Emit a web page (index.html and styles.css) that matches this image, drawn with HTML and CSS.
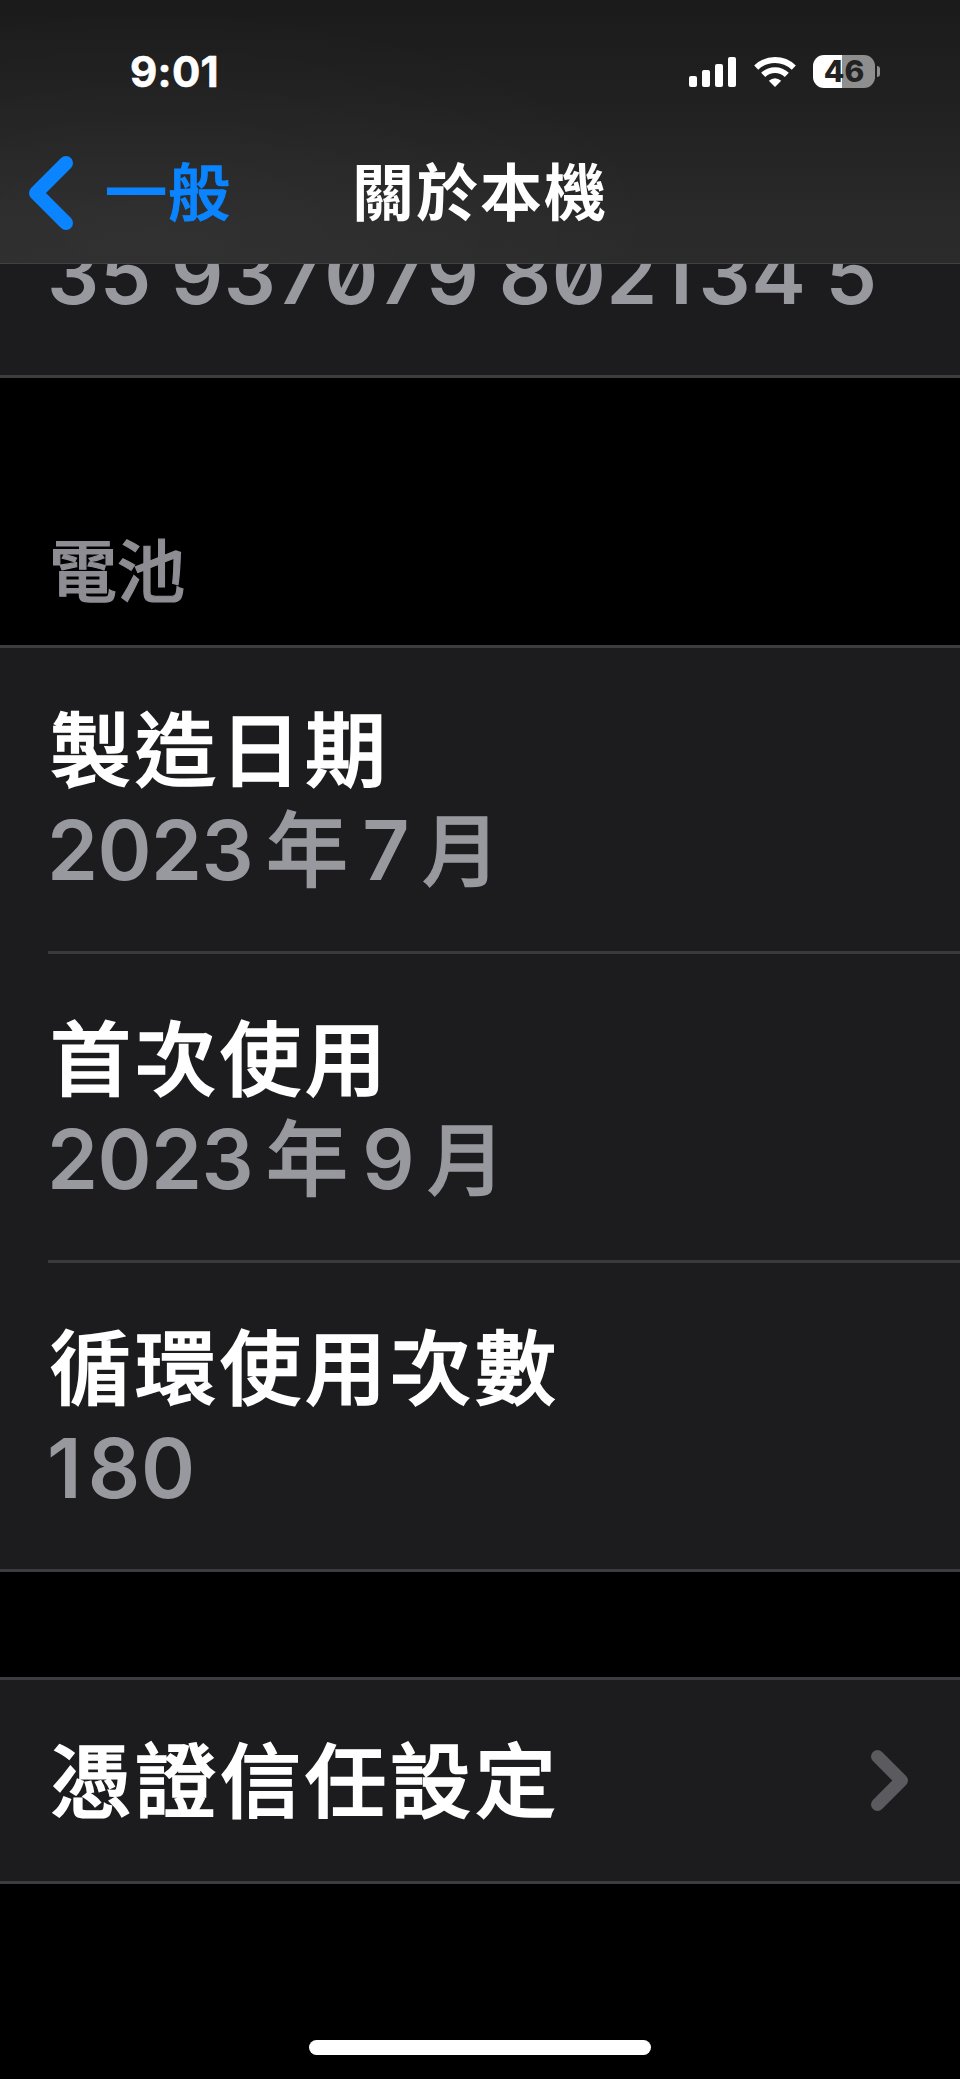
FILE: index.html
```html
<!DOCTYPE html>
<html lang="zh-Hant">
<head>
<meta charset="utf-8">
<title>關於本機</title>
<link rel="stylesheet" href="styles.css">
</head>
<body>
<div class="screen">
  <header class="header">
    <div class="status">
      <span class="time">9:01</span>
      <div class="status-icons">
        <svg class="signal" viewBox="0 0 47 30" fill="#fff"><rect x="0" y="19" width="8" height="11" rx="2"/><rect x="13" y="13" width="8" height="17" rx="2"/><rect x="26" y="7" width="8" height="23" rx="2"/><rect x="39" y="0" width="8" height="30" rx="2"/></svg>
        <svg class="wifi" viewBox="0 0 42 30" fill="none" stroke="#fff" stroke-width="5.8"><path d="M2.2 10.600A27 27 0 0 1 39.800 10.600"/><path d="M9.200 17.800A17 17 0 0 1 32.800 17.800"/><path d="M21 30L14.800 23.700Q21 18.600 27.200 23.700Z" fill="#fff" stroke="none"/></svg>
        <div class="battery"><span class="battery-body">46</span><span class="battery-cap"></span></div>
      </div>
    </div>
    <nav class="nav">
      <a class="back"><svg class="back-icon" viewBox="0 0 44 74" fill="none" stroke="#0a84ff" stroke-width="14" stroke-linecap="round" stroke-linejoin="round"><path d="M37 7L7 37L37 67"/></svg><span>一般</span></a>
      <h1 class="title">關於本機</h1>
    </nav>
  </header>
  <main>
    <section class="card imei"><div class="value imei-value">35 937079 802<span class="one">1</span>34 5</div></section>
    <h2 class="label">電池</h2>
    <section class="card bordered">
      <div class="row"><div class="name">製造日期</div><div class="value">2023 <span class="han">年</span> 7 <span class="han month">月</span></div></div>
      <div class="row"><div class="name">首次使用</div><div class="value">2023 <span class="han">年</span> 9 <span class="han month">月</span></div></div>
      <div class="row"><div class="name">循環使用次數</div><div class="value count"><span class="one">1</span>80</div></div>
    </section>
    <section class="card bordered link">
      <div class="name">憑證信任設定</div>
      <svg class="chevron" viewBox="0 0 37 61" fill="none" stroke="#5a5a5f" stroke-width="13" stroke-linecap="round" stroke-linejoin="round"><path d="M6.500 6.500L30.500 30.500L6.500 54.500"/></svg>
    </section>
  </main>
  <div class="home"></div>
</div>
</body>
</html>
```
FILE: styles.css
```css
* { box-sizing: border-box; margin: 0; padding: 0; }
body { background: #000; font-family: Inter, "Noto Sans CJK TC", sans-serif; color: #fff; }
.screen { width: 960px; height: 2079px; display: flex; flex-direction: column; overflow: hidden; background: #000; }
.header {
  height: 264px;
  flex: none;
  border-bottom: 1px solid #414144;
  background:
    radial-gradient(ellipse 520px 230px at 16% 88%, rgba(255,255,255,.03), transparent),
    linear-gradient(#1b1b1b, #202020 35%, #2a2a2b 85%, #2b2b2c);
}
.status { height: 143px; padding: 0 80px 0 130px; display: flex; justify-content: space-between; align-items: center; }
.time { font-size: 42px; font-weight: 700; line-height: 50px; -webkit-text-stroke: .6px #fff; letter-spacing: .3px; }
.status-icons { display: flex; align-items: center; }
.signal { width: 47px; height: 30px; margin-right: 18px; }
.wifi { width: 42px; height: 30px; margin-right: 17px; }
.battery { display: flex; align-items: center; gap: 2px; }
.battery-body { width: 62px; height: 33px; border-radius: 11px; background: linear-gradient(90deg, #fff 29px, #8e8e8e 29px); color: #222; font-size: 30px; font-weight: 800; line-height: 33px; text-align: center; }
.battery-cap { width: 3px; height: 11px; border-radius: 0 3px 3px 0; background: #8e8e8e; }
.nav { height: 120px; padding: 13px 29px 0; display: grid; grid-template-columns: 1fr auto 1fr; align-items: start; }
.back { display: flex; color: #0a84ff; font-size: 62px; font-weight: 500; line-height: 75px; letter-spacing: 1px; -webkit-text-stroke: 1.2px #0a84ff; }
.back-icon { width: 44px; height: 74px; margin-right: 32px; -webkit-text-stroke: 0; }
.title { font-size: 62px; font-weight: 700; line-height: 75px; letter-spacing: 2px; }
.card { background: #1c1c1e; }
.imei { height: 114px; border-bottom: 3px solid #3d3d41; padding-left: 47px; overflow: hidden; }
.imei-value { margin-top: -39px; font-feature-settings: "zero"; font-kerning: none; letter-spacing: .5px; word-spacing: -2px; white-space: nowrap; }
.label { height: 267px; padding: 154px 0 0 49px; color: #8d8d93; font-size: 68px; font-weight: 500; line-height: 80px; -webkit-text-stroke: 1.2px #8d8d93; }
.bordered { border-top: 3px solid #3d3d41; border-bottom: 3px solid #3d3d41; }
.row { margin-left: 48px; padding-top: 57px; height: 309px; border-bottom: 3px solid #3a3a3d; }
.row:first-child { height: 306px; padding-top: 54px; }
.row:last-child { height: 306px; border-bottom: 0; }
.name { font-size: 81px; font-weight: 500; line-height: 99px; letter-spacing: 4px; margin-left: 2px; -webkit-text-stroke: 1.6px #fff; }
.value { font-size: 82px; font-weight: 600; line-height: 99px; color: #98989f; }
.row .value { letter-spacing: -.6px; word-spacing: -7px; margin-left: -1px; }
.row .count { letter-spacing: .8px; }
.value .han { font-weight: 500; -webkit-text-stroke: 1.3px #98989f; letter-spacing: 1px; }
.value .month { font-size: 78px; }
.value .one { letter-spacing: 6px; }
.link { height: 207px; margin-top: 105px; padding: 53px 52px 0 48px; display: flex; justify-content: space-between; }
.chevron { width: 37px; height: 61px; margin-top: 17px; }
.home { width: 342px; height: 15px; border-radius: 8px; background: #fff; margin: 156px auto 0; flex: none; }
```
